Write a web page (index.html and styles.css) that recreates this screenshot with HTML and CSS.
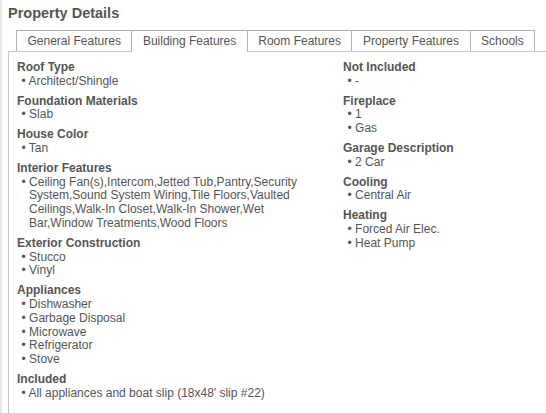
FILE: index.html
```html
<!DOCTYPE html>
<html lang="en">
<head>
    <meta charset="UTF-8">
    <meta name="viewport" content="width=device-width, initial-scale=1.0">
    <title>Property Details</title>
    <link rel="stylesheet" href="styles.css">
</head>
<body>
    <div class="page">
        <h2 class="title">Property Details</h2>
        <ul class="tabs">
            <li class="tab">General Features</li>
            <li class="tab active">Building Features</li>
            <li class="tab">Room Features</li>
            <li class="tab">Property Features</li>
            <li class="tab">Schools</li>
        </ul>
        <div class="panel">
            <div class="column">
                <div class="group">
                    <h4>Roof Type</h4>
                    <ul><li>Architect/Shingle</li></ul>
                </div>
                <div class="group">
                    <h4>Foundation Materials</h4>
                    <ul><li>Slab</li></ul>
                </div>
                <div class="group">
                    <h4>House Color</h4>
                    <ul><li>Tan</li></ul>
                </div>
                <div class="group">
                    <h4>Interior Features</h4>
                    <ul><li>Ceiling Fan(s),Intercom,Jetted Tub,Pantry,Security System,Sound System Wiring,Tile Floors,Vaulted Ceilings,Walk-In Closet,Walk-In Shower,Wet Bar,Window Treatments,Wood Floors</li></ul>
                </div>
                <div class="group">
                    <h4>Exterior Construction</h4>
                    <ul>
                        <li>Stucco</li>
                        <li>Vinyl</li>
                    </ul>
                </div>
                <div class="group">
                    <h4>Appliances</h4>
                    <ul>
                        <li>Dishwasher</li>
                        <li>Garbage Disposal</li>
                        <li>Microwave</li>
                        <li>Refrigerator</li>
                        <li>Stove</li>
                    </ul>
                </div>
                <div class="group">
                    <h4>Included</h4>
                    <ul><li>All appliances and boat slip (18x48' slip #22)</li></ul>
                </div>
            </div>
            <div class="column">
                <div class="group">
                    <h4>Not Included</h4>
                    <ul><li>-</li></ul>
                </div>
                <div class="group">
                    <h4>Fireplace</h4>
                    <ul>
                        <li>1</li>
                        <li>Gas</li>
                    </ul>
                </div>
                <div class="group">
                    <h4>Garage Description</h4>
                    <ul><li>2 Car</li></ul>
                </div>
                <div class="group">
                    <h4>Cooling</h4>
                    <ul><li>Central Air</li></ul>
                </div>
                <div class="group">
                    <h4>Heating</h4>
                    <ul>
                        <li>Forced Air Elec.</li>
                        <li>Heat Pump</li>
                    </ul>
                </div>
            </div>
        </div>
    </div>
</body>
</html>
```

FILE: styles.css
```css
html {
    overflow: hidden;
    background-color: #fff;
}
body {
    margin: 0;
    min-height: 100vh;
    box-sizing: border-box;
    border-left: 2px solid #efe4da;
    font-family: "Liberation Sans", Arial, sans-serif;
    color: #555;
}
.page {
    padding: 5px 0 0 6px;
}
.title {
    margin: 0 0 8px;
    font-size: 14.5px;
    line-height: 17px;
}
.tabs {
    display: flex;
    align-items: flex-start;
    list-style: none;
    margin: 0 0 0 8px;
    padding: 0;
    position: relative;
    z-index: 1;
}
.tab {
    padding: 3px 10.5px;
    font-size: 12px;
    line-height: 14px;
    border: 1px solid #b4b4b4;
    border-right: none;
    border-bottom: none;
    background-color: #fff;
}
.tab:last-child {
    border-right: 1px solid #b4b4b4;
}
.tab.active {
    padding-bottom: 4px;
    margin-bottom: -1px;
}
.panel {
    display: grid;
    grid-template-columns: 300px 1fr;
    column-gap: 26px;
    align-items: start;
    padding: 9px 8px;
    border: 1px solid #c8c8c8;
    border-right: none;
    font-size: 12px;
    line-height: 13.8px;
}
.group {
    margin-bottom: 6px;
}
.group h4 {
    margin: 0;
    font-size: 12px;
}
.group ul {
    list-style: none;
    margin: 0;
    padding: 0;
}
.group li {
    padding-left: 12px;
    text-indent: -7.5px;
}
.group li::before {
    content: "\2022  ";
}
```
